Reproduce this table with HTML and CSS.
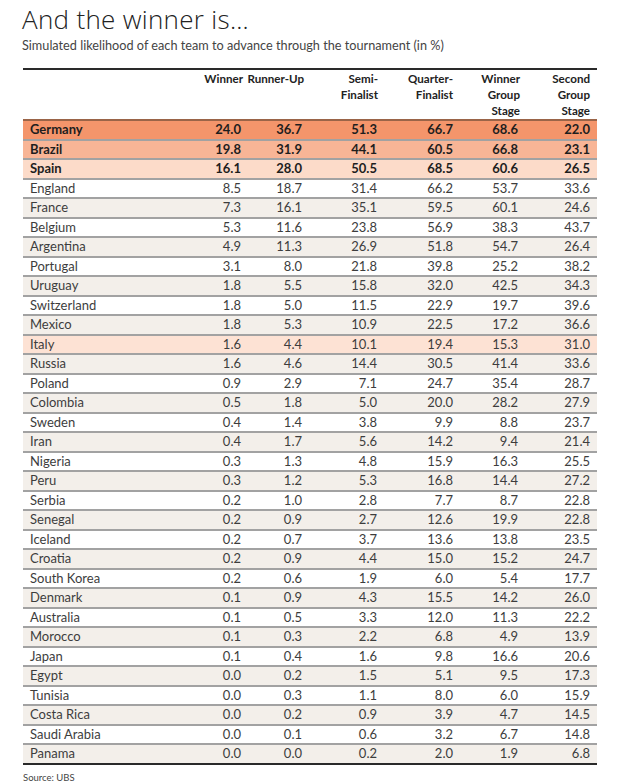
FILE: index.html
```html
<!DOCTYPE html>
<html>
<head>
<meta charset="utf-8">
<link rel="stylesheet" href="styles.css">
</head>
<body>
<div class="page">
  <h1 class="title">And the winner is…</h1>
  <p class="subtitle">Simulated likelihood of each team to advance through the tournament (in %)</p>
  <table class="data">
    <colgroup>
      <col class="c-name"><col class="c1"><col class="c2"><col class="c3"><col class="c4"><col class="c5"><col class="c6">
    </colgroup>
    <thead>
      <tr>
        <th></th>
        <th><span class="hx">Winner</span></th>
        <th><span class="hx">Runner-Up</span></th>
        <th><span class="hx1">Semi-<br>Finalist</span></th>
        <th>Quarter-<br>Finalist</th>
        <th><span class="hx">Winner<br>Group<br>Stage</span></th>
        <th class="last">Second<br>Group<br>Stage</th>
      </tr>
    </thead>
    <tbody>
      <tr class="top1"><td>Germany</td><td>24.0</td><td>36.7</td><td>51.3</td><td>66.7</td><td>68.6</td><td>22.0</td></tr>
      <tr class="top2"><td>Brazil</td><td>19.8</td><td>31.9</td><td>44.1</td><td>60.5</td><td>66.8</td><td>23.1</td></tr>
      <tr class="top3"><td>Spain</td><td>16.1</td><td>28.0</td><td>50.5</td><td>68.5</td><td>60.6</td><td>26.5</td></tr>
      <tr><td>England</td><td>8.5</td><td>18.7</td><td>31.4</td><td>66.2</td><td>53.7</td><td>33.6</td></tr>
      <tr class="alt"><td>France</td><td>7.3</td><td>16.1</td><td>35.1</td><td>59.5</td><td>60.1</td><td>24.6</td></tr>
      <tr><td>Belgium</td><td>5.3</td><td>11.6</td><td>23.8</td><td>56.9</td><td>38.3</td><td>43.7</td></tr>
      <tr class="alt"><td>Argentina</td><td>4.9</td><td>11.3</td><td>26.9</td><td>51.8</td><td>54.7</td><td>26.4</td></tr>
      <tr><td>Portugal</td><td>3.1</td><td>8.0</td><td>21.8</td><td>39.8</td><td>25.2</td><td>38.2</td></tr>
      <tr class="alt"><td>Uruguay</td><td>1.8</td><td>5.5</td><td>15.8</td><td>32.0</td><td>42.5</td><td>34.3</td></tr>
      <tr><td>Switzerland</td><td>1.8</td><td>5.0</td><td>11.5</td><td>22.9</td><td>19.7</td><td>39.6</td></tr>
      <tr class="alt"><td>Mexico</td><td>1.8</td><td>5.3</td><td>10.9</td><td>22.5</td><td>17.2</td><td>36.6</td></tr>
      <tr class="hl"><td>Italy</td><td>1.6</td><td>4.4</td><td>10.1</td><td>19.4</td><td>15.3</td><td>31.0</td></tr>
      <tr class="alt"><td>Russia</td><td>1.6</td><td>4.6</td><td>14.4</td><td>30.5</td><td>41.4</td><td>33.6</td></tr>
      <tr><td>Poland</td><td>0.9</td><td>2.9</td><td>7.1</td><td>24.7</td><td>35.4</td><td>28.7</td></tr>
      <tr class="alt"><td>Colombia</td><td>0.5</td><td>1.8</td><td>5.0</td><td>20.0</td><td>28.2</td><td>27.9</td></tr>
      <tr><td>Sweden</td><td>0.4</td><td>1.4</td><td>3.8</td><td>9.9</td><td>8.8</td><td>23.7</td></tr>
      <tr class="alt"><td>Iran</td><td>0.4</td><td>1.7</td><td>5.6</td><td>14.2</td><td>9.4</td><td>21.4</td></tr>
      <tr><td>Nigeria</td><td>0.3</td><td>1.3</td><td>4.8</td><td>15.9</td><td>16.3</td><td>25.5</td></tr>
      <tr class="alt"><td>Peru</td><td>0.3</td><td>1.2</td><td>5.3</td><td>16.8</td><td>14.4</td><td>27.2</td></tr>
      <tr><td>Serbia</td><td>0.2</td><td>1.0</td><td>2.8</td><td>7.7</td><td>8.7</td><td>22.8</td></tr>
      <tr class="alt"><td>Senegal</td><td>0.2</td><td>0.9</td><td>2.7</td><td>12.6</td><td>19.9</td><td>22.8</td></tr>
      <tr><td>Iceland</td><td>0.2</td><td>0.7</td><td>3.7</td><td>13.6</td><td>13.8</td><td>23.5</td></tr>
      <tr class="alt"><td>Croatia</td><td>0.2</td><td>0.9</td><td>4.4</td><td>15.0</td><td>15.2</td><td>24.7</td></tr>
      <tr><td>South Korea</td><td>0.2</td><td>0.6</td><td>1.9</td><td>6.0</td><td>5.4</td><td>17.7</td></tr>
      <tr class="alt"><td>Denmark</td><td>0.1</td><td>0.9</td><td>4.3</td><td>15.5</td><td>14.2</td><td>26.0</td></tr>
      <tr><td>Australia</td><td>0.1</td><td>0.5</td><td>3.3</td><td>12.0</td><td>11.3</td><td>22.2</td></tr>
      <tr class="alt"><td>Morocco</td><td>0.1</td><td>0.3</td><td>2.2</td><td>6.8</td><td>4.9</td><td>13.9</td></tr>
      <tr><td>Japan</td><td>0.1</td><td>0.4</td><td>1.6</td><td>9.8</td><td>16.6</td><td>20.6</td></tr>
      <tr class="alt"><td>Egypt</td><td>0.0</td><td>0.2</td><td>1.5</td><td>5.1</td><td>9.5</td><td>17.3</td></tr>
      <tr><td>Tunisia</td><td>0.0</td><td>0.3</td><td>1.1</td><td>8.0</td><td>6.0</td><td>15.9</td></tr>
      <tr class="alt"><td>Costa Rica</td><td>0.0</td><td>0.2</td><td>0.9</td><td>3.9</td><td>4.7</td><td>14.5</td></tr>
      <tr><td>Saudi Arabia</td><td>0.0</td><td>0.1</td><td>0.6</td><td>3.2</td><td>6.7</td><td>14.8</td></tr>
      <tr class="alt lastrow"><td>Panama</td><td>0.0</td><td>0.0</td><td>0.2</td><td>2.0</td><td>1.9</td><td>6.8</td></tr>
    </tbody>
  </table>
  <p class="source">Source: UBS</p>
</div>
</body>
</html>
```

FILE: styles.css
```css
html, body {
  margin: 0;
  padding: 0;
  background: #ffffff;
}

.page {
  padding: 3px 0 0 22px;
  width: 575px;
  font-family: Lato, "Open Sans", sans-serif;
  color: #3a3a3a;
}

.title {
  margin: 0;
  font-family: "Open Sans", Lato, sans-serif;
  font-size: 26px;
  line-height: 32px;
  font-weight: 300;
  letter-spacing: 0.3px;
  color: #222;
}

.subtitle {
  margin: 2px 0 0 0;
  font-size: 12.7px;
  line-height: 16px;
  color: #444;
}

.data {
  margin-top: 15px;
  margin-left: 1px;
  width: 574px;
  border-collapse: collapse;
  table-layout: fixed;
  border-top: 2px solid #2a2a2a;
  border-bottom: 2px solid #2a2a2a;
}

.c-name { width: 178px; }
.c1 { width: 40px; }
.c2 { width: 61px; }
.c3 { width: 75px; }
.c4 { width: 76px; }
.c5 { width: 65px; }
.c6 { width: 79px; }

.data th {
  font-size: 11.6px;
  line-height: 16px;
  font-weight: 700;
  color: #222;
  text-align: right;
  vertical-align: top;
  padding: 1px 0 0 0;
  height: 43px;
  border-bottom: 2px solid #9a6448;
  white-space: nowrap;
}

.data th .hx {
  display: inline-block;
  margin-right: -2px;
}

.data th .hx1 {
  display: inline-block;
  margin-right: -1px;
}

.data th.last {
  padding-right: 7px;
}

.data td {
  font-size: 13px;
  height: 17.5px;
  line-height: 17px;
  padding: 0;
  text-align: right;
  border-bottom: 2px solid #a2a2a2;
  color: #3d3d3d;
  white-space: nowrap;
}

.data td:first-child {
  text-align: left;
  padding-left: 7px;
}

.data td:last-child {
  padding-right: 7px;
}

.data tr.alt td { background: #f3efea; }
.data tr.hl td { background: #fde2d4; }

.data tr.top1 td { background: #f4956b; }
.data tr.top2 td { background: #f8b596; }
.data tr.top3 td { background: #fcdbc9; }

.data tr.top1 td,
.data tr.top2 td,
.data tr.top3 td {
  font-weight: 700;
  color: #1e1e1e;
}

.data tr.lastrow td { border-bottom: none; }

.source {
  margin: 7px 0 0 1px;
  font-size: 9.5px;
  color: #444;
}
```
